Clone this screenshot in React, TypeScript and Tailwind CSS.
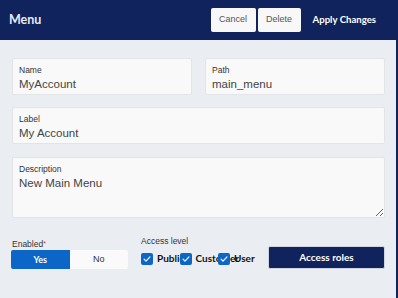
import React from "react";

const sans = "font-['Liberation_Sans',Arial,sans-serif]";
const lato = "font-['Lato','Liberation_Sans',sans-serif]";

function Field({ label, value, className = "" }: { label: string; value: string; className?: string }) {
  return (
    <div className={`h-[37px] rounded-[2px] border border-[#e2e4e7] bg-[#f9f9f9] pl-[6px] pt-[5px] ${className}`}>
      <div className={`${sans} text-[8.5px] leading-[12px] text-[#333]`}>{label}</div>
      <div className={`${sans} mt-[1px] text-[11.5px] leading-[14px] text-[#444]`}>{value}</div>
    </div>
  );
}

function Check({ label }: { label: string }) {
  return (
    <div className="flex w-[38.5px] shrink-0 items-center gap-[4px] overflow-visible whitespace-nowrap">
      <span className="relative flex h-[12px] w-[12px] shrink-0 items-center justify-center rounded-[2px] bg-[#0b66c8]">
        <svg viewBox="0 0 12 12" className="h-[10px] w-[10px]" fill="none">
          <path d="M2.5 6.2l2.3 2.3 4.8-5" stroke="white" strokeWidth="1.4" strokeLinecap="round" strokeLinejoin="round" />
        </svg>
      </span>
      <span className={`${lato} text-[10px] font-bold text-[#111]`}>{label}</span>
    </div>
  );
}

export default function App() {
  return (
    <div className="h-[298px] w-[398px] overflow-hidden border-r-2 border-[#10235c] bg-[#eaeef2]">
      {/* Header */}
      <div className="flex h-[40px] items-center bg-[#10235c] pl-[9px]">
        <h1 className={`${lato} text-[12.5px] font-bold text-[#e8ebf2]`}>Menu</h1>
        <div className="ml-auto flex items-center">
          <button className={`${sans} h-[24px] w-[45px] rounded-[2px] bg-[#f8f8f8] text-[9px] text-[#555]`}>Cancel</button>
          <button className={`${sans} ml-[2px] h-[24px] w-[43px] rounded-[2px] bg-[#f8f8f8] text-[9px] text-[#555]`}>Delete</button>
          <button className={`${lato} pl-[12px] pr-[20px] text-[9.6px] font-bold text-white`}>Apply Changes</button>
        </div>
      </div>

      {/* Form */}
      <div className="pl-[12px] pr-[11px] pt-[18px]">
        <div className="grid grid-cols-2 gap-x-[13px]">
          <Field label="Name" value="MyAccount" />
          <Field label="Path" value="main_menu" />
        </div>
        <Field label="Label" value="My Account" className="mt-[12px]" />
        <div className="mt-[13px] flex h-[61px] flex-col rounded-[2px] border border-[#e2e4e7] bg-[#f9f9f9] pl-[6px] pt-[5px]">
          <div className={`${sans} text-[8.5px] leading-[12px] text-[#333]`}>Description</div>
          <textarea
            readOnly
            value="New Main Menu"
            className={`${sans} mt-[1px] min-h-0 flex-1 resize-y bg-transparent p-0 text-[11.5px] leading-[14px] text-[#444] outline-none`}
          />
        </div>

        {/* Bottom row */}
        <div className="mt-[17px] flex items-end">
          <div className="w-[116px]">
            <div className={`${sans} text-[8.5px] leading-[12px] text-[#333]`}>
              Enabled<span className="align-top text-[7px] text-[#e0302e]">*</span>
            </div>
            <div className="flex h-[19px] -ml-[1px]">
              <div className={`${lato} flex flex-1 items-center justify-center rounded-l-[2px] bg-[#0b66c8] text-[9px] font-bold text-white`}>Yes</div>
              <div className={`${sans} flex flex-1 items-center justify-center rounded-r-[2px] bg-[#fafafa] text-[9px] text-[#333]`}>No</div>
            </div>
          </div>
          <div className="ml-[13px] mb-[3px]">
            <div className={`${sans} mb-[4px] text-[8.5px] leading-[12px] text-[#333]`}>Access level</div>
            <div className="flex">
              <Check label="Public" />
              <Check label="Customer" />
              <Check label="User" />
            </div>
          </div>
          <button className={`${lato} ml-auto h-[23px] w-[117px] rounded-[2px] border border-[#cfd5e0] bg-[#10235c] text-[10px] font-bold text-white`}>
            Access roles
          </button>
        </div>
      </div>
    </div>
  );
}
